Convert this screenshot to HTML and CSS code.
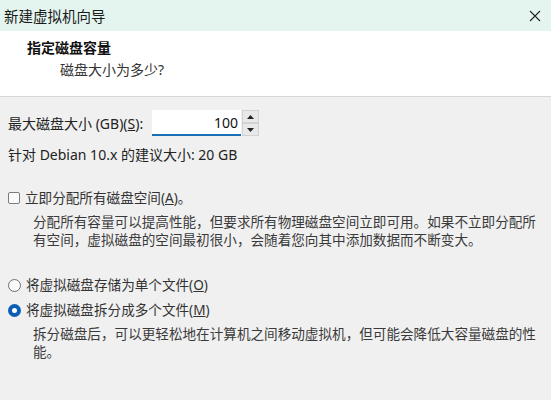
FILE: index.html
```html
<!DOCTYPE html>
<html lang="zh-CN">
<head>
<meta charset="utf-8">
<title>新建虚拟机向导</title>
<link rel="stylesheet" href="styles.css">
</head>
<body>
<div class="window">
  <div class="titlebar">
    <span class="title">新建虚拟机向导</span>
    <svg class="close" width="12" height="12" viewBox="0 0 12 12"><path d="M1 1L11 11M11 1L1 11" stroke="#222" stroke-width="1.1" fill="none"/></svg>
  </div>
  <div class="header">
    <div class="h-title">指定磁盘容量</div>
    <div class="h-sub">磁盘大小为多少?</div>
  </div>
  <div class="content">
    <div class="size-row">
      <span class="label">最大磁盘大小 (GB)(<u>S</u>):</span>
      <div class="spin">
        <div class="spin-input">100</div>
        <div class="spin-btns">
          <div class="spin-btn"><svg width="7" height="4" viewBox="0 0 7 4"><path d="M0 4L3.5 0L7 4Z" fill="#222"/></svg></div>
          <div class="spin-btn"><svg width="7" height="4" viewBox="0 0 7 4"><path d="M0 0L3.5 4L7 0Z" fill="#222"/></svg></div>
        </div>
      </div>
    </div>
    <div class="hint">针对 Debian 10.x 的建议大小: 20 GB</div>
    <div class="option check-row">
      <span class="checkbox"></span>
      <span class="opt-text">立即分配所有磁盘空间(<u>A</u>)。</span>
    </div>
    <p class="desc">分配所有容量可以提高性能，但要求所有物理磁盘空间立即可用。如果不立即分配所有空间，虚拟磁盘的空间最初很小，会随着您向其中添加数据而不断变大。</p>
    <div class="option radio-row first">
      <span class="radio"></span>
      <span class="opt-text">将虚拟磁盘存储为单个文件(<u>O</u>)</span>
    </div>
    <div class="option radio-row second">
      <span class="radio checked"></span>
      <span class="opt-text">将虚拟磁盘拆分成多个文件(<u>M</u>)</span>
    </div>
    <p class="desc">拆分磁盘后，可以更轻松地在计算机之间移动虚拟机，但可能会降低大容量磁盘的性能。</p>
  </div>
</div>
</body>
</html>
```

FILE: styles.css
```css
* { box-sizing: border-box; }
html, body {
  margin: 0;
  padding: 0;
}
body {
  width: 551px;
  height: 400px;
  overflow: hidden;
  background: #f0f0f0;
  font-family: "Noto Sans", "Noto Sans CJK SC", sans-serif;
  font-size: 14px;
  color: #222;
}
.window {
  display: flex;
  flex-direction: column;
  height: 400px;
}
.titlebar {
  height: 31px;
  background: #e4f5ef;
  display: flex;
  align-items: center;
  justify-content: space-between;
  padding: 0 10px 0 4px;
}
.title {
  font-size: 14.5px;
  color: #1a1a1a;
  line-height: 18px;
}
.close { display: block; }
.header {
  height: 66px;
  background: #ffffff;
  border-bottom: 1px solid #d6d6d6;
  padding: 8px 0 0 27px;
}
.h-title {
  font-weight: bold;
  line-height: 18px;
  color: #111;
}
.h-sub {
  margin: 4px 0 0 33px;
  line-height: 18px;
  color: #333;
}
.content {
  padding: 13px 0 0 8px;
}
.size-row {
  display: flex;
  align-items: center;
  height: 26px;
}
.label {
  width: 144px;
  line-height: 18px;
  padding-top: 2px;
  color: #222;
}
.spin {
  display: flex;
  height: 26px;
}
.spin-input {
  width: 89px;
  height: 26px;
  background: #fff;
  border-bottom: 2px solid #1b6fb5;
  text-align: right;
  padding: 3px 3px 0 0;
  line-height: 19px;
  color: #111;
}
.spin-btns {
  display: flex;
  flex-direction: column;
  margin-left: 1px;
}
.spin-btn {
  width: 17px;
  height: 13px;
  background: #e8e8e8;
  border: 1px solid #d2d2d2;
  display: flex;
  align-items: center;
  justify-content: center;
}
.spin-btn svg { display: block; }
.hint {
  margin-top: 10px;
  line-height: 18px;
  color: #222;
}
.option {
  display: flex;
  align-items: center;
  height: 18px;
  line-height: 18px;
}
.check-row { margin-top: 25px; }
.opt-text {
  margin-left: 5px;
  font-size: 13.6px;
  color: #333;
}
.checkbox {
  width: 12px;
  height: 12px;
  border: 1px solid #7c7c7c;
  border-radius: 2px;
  background: #fafafa;
}
.radio {
  width: 13px;
  height: 13px;
  border: 1px solid #6f6f6f;
  border-radius: 50%;
  background: #fafafa;
}
.radio.checked {
  border: 4px solid #0a5eb5;
  background: #fff;
}
.radio-row.first { margin-top: 27px; }
.radio-row.second { margin-top: 7px; }
.desc {
  margin: 6px 0 0 25px;
  width: 516px;
  font-size: 13.6px;
  line-height: 18px;
  color: #3a3a3a;
}
```
